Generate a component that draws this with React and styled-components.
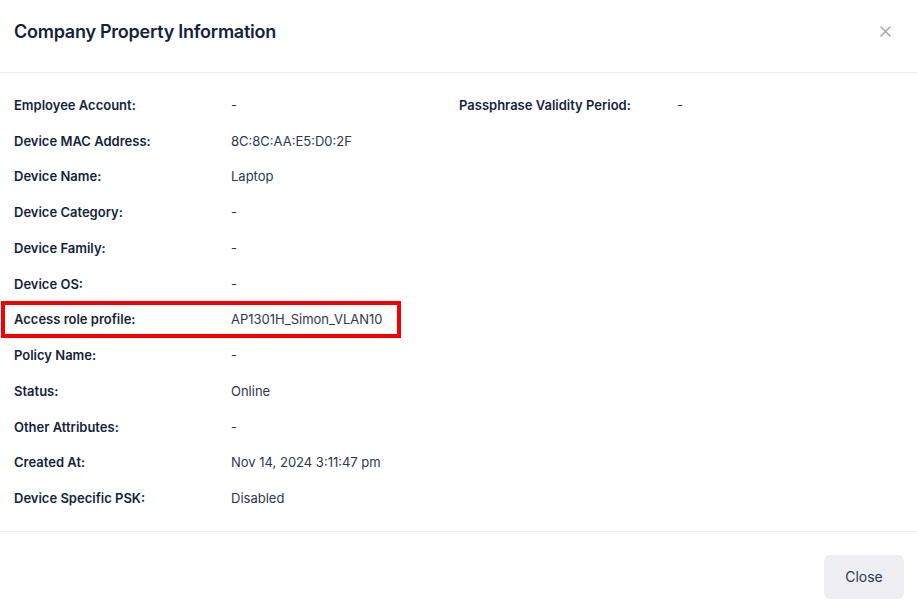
import React from "react"
import styled, {createGlobalStyle} from "styled-components"

const GlobalStyle = createGlobalStyle`
    html, body {
        margin: 0;
        padding: 0;
        background: #fff;
    }
    body {
        font-family: Inter, "Noto Sans", sans-serif;
        color: #161f3b;
    }
`

const Modal = styled.div`
    width: 917px;
    height: 615px;
    display: flex;
    flex-direction: column;
    background: #fff;
`

const Header = styled.div`
    height: 73px;
    box-sizing: border-box;
    display: flex;
    align-items: center;
    justify-content: space-between;
    padding: 0 25px 9px 14px;
    border-bottom: 1px solid #e9eaee;
`

const Title = styled.h2`
    margin: 0;
    font-size: 18px;
    font-weight: 600;
    color: #161f3b;
    letter-spacing: -0.25px;
`

const CloseIcon = styled.button`
    border: none;
    background: none;
    padding: 0;
    width: 14px;
    height: 14px;
    display: flex;
    align-items: center;
    justify-content: center;
    cursor: pointer;
`

const Body = styled.div`
    display: grid;
    grid-template-columns: 445px 1fr;
    padding: 14px 14px 15px;
    border-bottom: 1px solid #e9eaee;
`

const Column = styled.div`
    display: grid;
    grid-auto-rows: 35.75px;
    align-content: start;
`

const Row = styled.div`
    position: relative;
    display: grid;
    grid-template-columns: ${props => props.labelWidth || 217}px 1fr;
    align-items: center;
    font-size: 13px;

    ${props => props.highlight && `
        &::after {
            content: "";
            position: absolute;
            left: -13px;
            top: -1px;
            bottom: -1px;
            width: 400px;
            box-sizing: border-box;
            border: 4px solid #f40000;
            pointer-events: none;
        }
    `}
`

const Label = styled.span`
    font-weight: 600;
    color: #161f3b;
`

const Value = styled.span`
    font-weight: 400;
    color: #2e3650;
`

const Footer = styled.div`
    flex: 1;
    display: flex;
    justify-content: flex-end;
    align-items: flex-end;
    padding: 0 13px 16px;
`

const CloseButton = styled.button`
    width: 80px;
    height: 44px;
    border: none;
    border-radius: 6px;
    background: #efeff3;
    color: #2e3650;
    font-family: Inter, "Noto Sans", sans-serif;
    font-size: 14px;
    padding: 0 0 2px;
    cursor: pointer;
`

const leftFields = [
    ["Employee Account:", "-"],
    ["Device MAC Address:", "8C:8C:AA:E5:D0:2F"],
    ["Device Name:", "Laptop"],
    ["Device Category:", "-"],
    ["Device Family:", "-"],
    ["Device OS:", "-"],
    ["Access role profile:", "AP1301H_Simon_VLAN10", true],
    ["Policy Name:", "-"],
    ["Status:", "Online"],
    ["Other Attributes:", "-"],
    ["Created At:", "Nov 14, 2024 3:11:47 pm"],
    ["Device Specific PSK:", "Disabled"],
]

const rightFields = [
    ["Passphrase Validity Period:", "-"],
]

const App = () => {
    return (
        <Modal>
            <GlobalStyle />
            <Header>
                <Title>Company Property Information</Title>
                <CloseIcon aria-label="Close">
                    <svg width="11" height="11" viewBox="0 0 11 11">
                        <path d="M1 1 L10 10 M10 1 L1 10" stroke="#a3a8bd" strokeWidth="1.6" strokeLinecap="round" />
                    </svg>
                </CloseIcon>
            </Header>
            <Body>
                <Column>
                    {leftFields.map(([label, value, hl]) => (
                        <Row key={label} highlight={hl}>
                            <Label>{label}</Label>
                            <Value>{value}</Value>
                        </Row>
                    ))}
                </Column>
                <Column>
                    {rightFields.map(([label, value]) => (
                        <Row key={label} labelWidth={218}>
                            <Label>{label}</Label>
                            <Value>{value}</Value>
                        </Row>
                    ))}
                </Column>
            </Body>
            <Footer>
                <CloseButton>Close</CloseButton>
            </Footer>
        </Modal>
    )
}

export default App
